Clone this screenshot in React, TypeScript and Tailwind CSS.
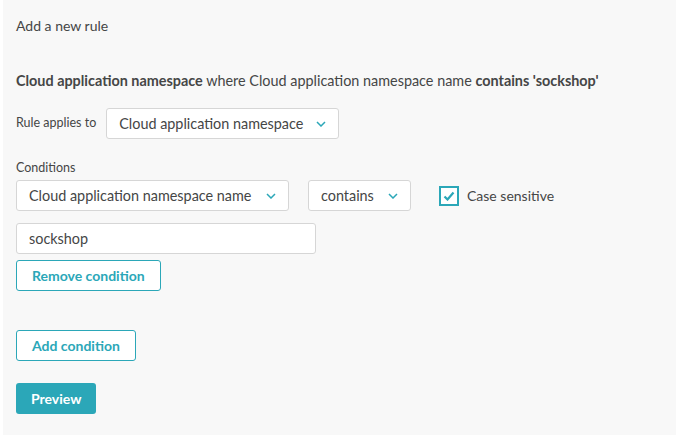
import React, { useState } from 'react';

const Chevron = () => (
    <svg width="10" height="6" viewBox="0 0 10 6" className="ml-3 shrink-0">
        <path d="M1 1l4 4 4-4" fill="none" stroke="#2ba7b8" strokeWidth="1.5" />
    </svg>
);

const Select = ({ label, className = '' }: { label: string; className?: string }) => (
    <div
        className={`flex items-center justify-between h-[31px] px-3 bg-white border border-[#d6d6d6] rounded-[3px] text-[14.4px] text-[#454646] ${className}`}
    >
        <span>{label}</span>
        <Chevron />
    </div>
);

const App = () => {
    const [caseSensitive, setCaseSensitive] = useState(true);

    return (
        <div className="w-[676px] h-[435px] bg-[#f8f8f8] border-l-[3px] border-white font-['Lato',sans-serif] text-[#454646]">
            <div className="pl-[13px] pt-[17px]">
                <h2 className="text-[14px] leading-[18px]">Add a new rule</h2>

                <p className="mt-[36px] text-[14.4px] leading-[20px]">
                    <span className="font-bold">Cloud application namespace</span> where Cloud application namespace name{' '}
                    <span className="font-bold">contains 'sockshop'</span>
                </p>

                <div className="flex items-center gap-[10px] mt-[17px]">
                    <span className="text-[12.5px]">Rule applies to</span>
                    <Select label="Cloud application namespace" className="w-[233px]" />
                </div>

                <div className="mt-[21px] text-[12.5px] leading-[16px]">Conditions</div>

                <div className="flex items-center mt-[4px]">
                    <Select label="Cloud application namespace name" className="w-[273px]" />
                    <Select label="contains" className="w-[103px] ml-[19px]" />
                    <label className="flex items-center ml-[28px] cursor-pointer" onClick={() => setCaseSensitive(!caseSensitive)}>
                        <span className="flex items-center justify-center w-[20px] h-[20px] border-2 border-[#2ba7b8] bg-white">
                            {caseSensitive && (
                                <svg width="12" height="10" viewBox="0 0 12 10">
                                    <path d="M1.5 5.5l3 3 6-7" fill="none" stroke="#2ba7b8" strokeWidth="2.2" />
                                </svg>
                            )}
                        </span>
                        <span className="ml-[8px] text-[14px]">Case sensitive</span>
                    </label>
                </div>

                <input
                    defaultValue="sockshop"
                    className="block mt-[12px] w-[300px] h-[31px] px-3 bg-white border border-[#d6d6d6] rounded-[3px] text-[14.4px] text-[#454646] outline-none"
                />

                <button className="block mt-[6px] h-[31px] px-[15px] border border-[#2ba7b8] rounded-[3px] text-[14px] font-bold text-[#2ba7b8] bg-white">
                    Remove condition
                </button>

                <button className="block mt-[39px] h-[31px] px-[15px] border border-[#2ba7b8] rounded-[3px] text-[14px] font-bold text-[#2ba7b8] bg-white">
                    Add condition
                </button>

                <button className="block mt-[22px] h-[31px] px-[15px] rounded-[3px] text-[14px] font-bold text-white bg-[#2ba7b8]">
                    Preview
                </button>
            </div>
        </div>
    );
};

export default App;
